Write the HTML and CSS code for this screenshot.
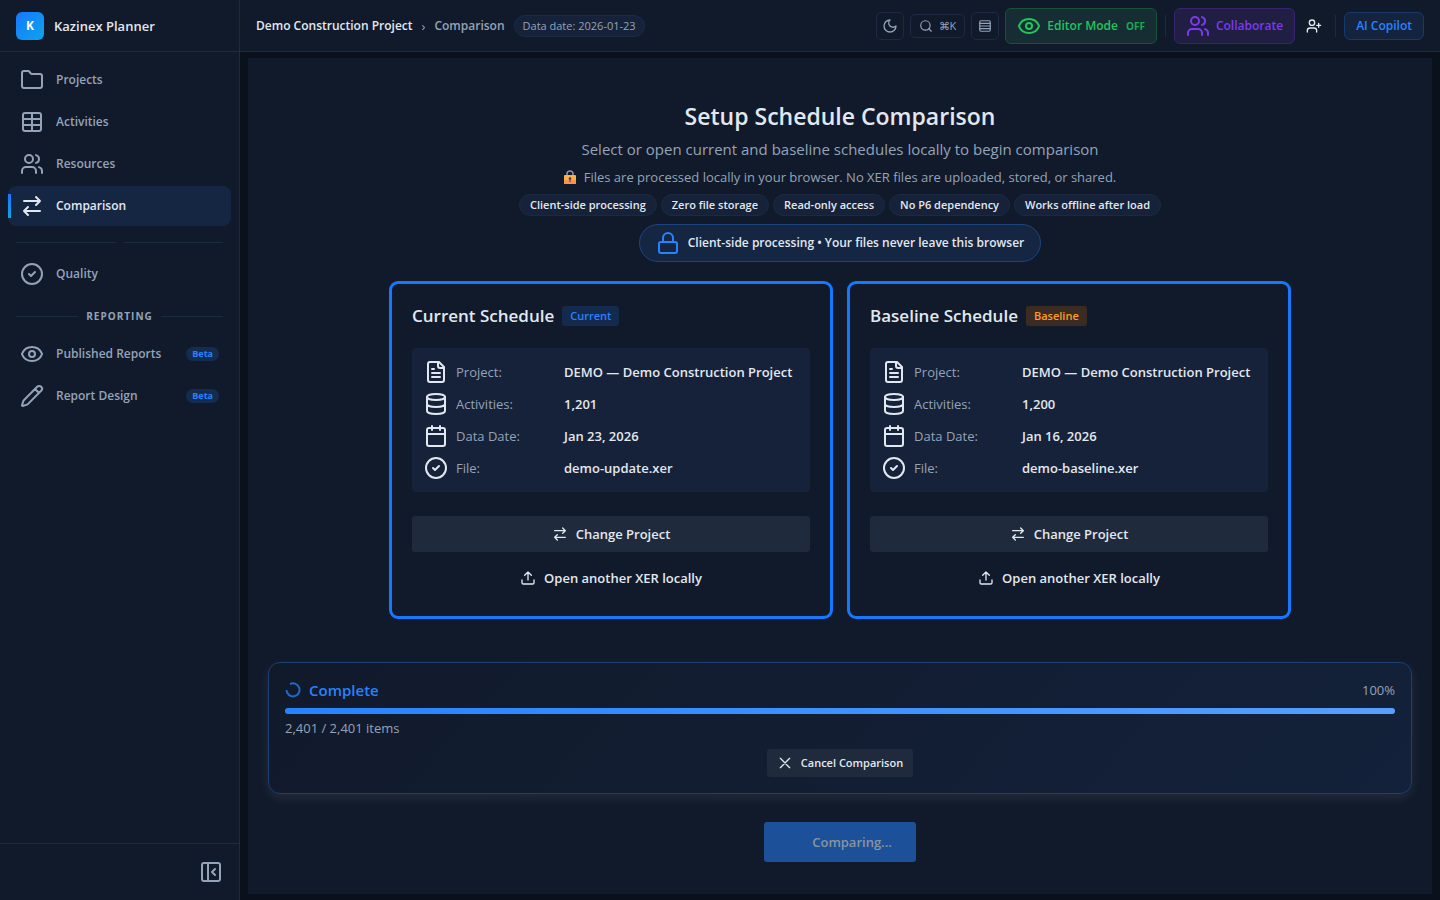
FILE: index.html
```html
<!DOCTYPE html>
<html lang="en">
<head>
    <meta charset="UTF-8">
    <meta name="viewport" content="width=device-width, initial-scale=1.0">
    <title>Kazinex Planner</title>
    <link rel="stylesheet" href="styles.css">
</head>
<body>
    <!-- Icon set -->
    <svg class="sprite" aria-hidden="true">
        <symbol id="i-folder" viewBox="0 0 24 24"><path d="M20 20a2 2 0 0 0 2-2V8a2 2 0 0 0-2-2h-7.9a2 2 0 0 1-1.69-.9L9.6 3.9A2 2 0 0 0 7.93 3H4a2 2 0 0 0-2 2v13a2 2 0 0 0 2 2Z"/></symbol>
        <symbol id="i-table" viewBox="0 0 24 24"><rect x="3" y="3" width="18" height="18" rx="2"/><path d="M12 3v18M3 9h18M3 15h18"/></symbol>
        <symbol id="i-users" viewBox="0 0 24 24"><path d="M16 21v-2a4 4 0 0 0-4-4H6a4 4 0 0 0-4 4v2"/><circle cx="9" cy="7" r="4"/><path d="M22 21v-2a4 4 0 0 0-3-3.87M16 3.13a4 4 0 0 1 0 7.75"/></symbol>
        <symbol id="i-swap" viewBox="0 0 24 24"><path d="m16 3 4 4-4 4M20 7H4M8 21l-4-4 4-4M4 17h16"/></symbol>
        <symbol id="i-check" viewBox="0 0 24 24"><circle cx="12" cy="12" r="10"/><path d="m9 12 2 2 4-4"/></symbol>
        <symbol id="i-eye" viewBox="0 0 24 24"><path d="M2.06 12.35a1 1 0 0 1 0-.7 10.75 10.75 0 0 1 19.88 0 1 1 0 0 1 0 .7 10.75 10.75 0 0 1-19.88 0"/><circle cx="12" cy="12" r="3"/></symbol>
        <symbol id="i-pencil" viewBox="0 0 24 24"><path d="M21.174 6.812a1 1 0 0 0-3.986-3.987L3.842 16.174a2 2 0 0 0-.5.83l-1.321 4.352a.5.5 0 0 0 .623.622l4.353-1.32a2 2 0 0 0 .83-.497zM15 5l4 4"/></symbol>
        <symbol id="i-collapse" viewBox="0 0 24 24"><rect x="3" y="3" width="18" height="18" rx="2"/><path d="M9 3v18M16 15l-3-3 3-3"/></symbol>
        <symbol id="i-moon" viewBox="0 0 24 24"><path d="M12 3a6 6 0 0 0 9 9 9 9 0 1 1-9-9Z"/></symbol>
        <symbol id="i-search" viewBox="0 0 24 24"><circle cx="11" cy="11" r="8"/><path d="m21 21-4.3-4.3"/></symbol>
        <symbol id="i-rows" viewBox="0 0 24 24"><rect x="3" y="3" width="18" height="18" rx="2"/><path d="M21 7.5H3M21 12H3M21 16.5H3"/></symbol>
        <symbol id="i-user-plus" viewBox="0 0 24 24"><path d="M16 21v-2a4 4 0 0 0-4-4H6a4 4 0 0 0-4 4v2"/><circle cx="9" cy="7" r="4"/><path d="M19 8v6M22 11h-6"/></symbol>
        <symbol id="i-lock" viewBox="0 0 24 24"><rect x="3" y="11" width="18" height="11" rx="2"/><path d="M7 11V7a5 5 0 0 1 10 0v4"/></symbol>
        <symbol id="i-file" viewBox="0 0 24 24"><path d="M15 2H6a2 2 0 0 0-2 2v16a2 2 0 0 0 2 2h12a2 2 0 0 0 2-2V7Z"/><path d="M14 2v4a2 2 0 0 0 2 2h4M10 9H8M16 13H8M16 17H8"/></symbol>
        <symbol id="i-database" viewBox="0 0 24 24"><ellipse cx="12" cy="5" rx="9" ry="3"/><path d="M3 5v14a9 3 0 0 0 18 0V5M3 12a9 3 0 0 0 18 0"/></symbol>
        <symbol id="i-calendar" viewBox="0 0 24 24"><path d="M8 2v4M16 2v4"/><rect x="3" y="4" width="18" height="18" rx="2"/><path d="M3 10h18"/></symbol>
        <symbol id="i-upload" viewBox="0 0 24 24"><path d="M21 15v4a2 2 0 0 1-2 2H5a2 2 0 0 1-2-2v-4M17 8l-5-5-5 5M12 3v12"/></symbol>
        <symbol id="i-close" viewBox="0 0 24 24"><path d="M19 5 5 19M5 5l14 14"/></symbol>
    </svg>

    <div class="app">
        <aside class="sidebar">
            <div class="brand">
                <span class="brand-logo">K</span>
                <span class="brand-name">Kazinex Planner</span>
            </div>
            <nav class="nav">
                <a class="nav-item" href="#projects"><svg class="icon"><use href="#i-folder"/></svg>Projects</a>
                <a class="nav-item" href="#activities"><svg class="icon"><use href="#i-table"/></svg>Activities</a>
                <a class="nav-item" href="#resources"><svg class="icon"><use href="#i-users"/></svg>Resources</a>
                <a class="nav-item active" href="#comparison"><svg class="icon"><use href="#i-swap"/></svg>Comparison</a>
                <div class="nav-divider"></div>
                <a class="nav-item" href="#quality"><svg class="icon"><use href="#i-check"/></svg>Quality</a>
                <div class="nav-divider nav-section">REPORTING</div>
                <a class="nav-item" href="#reports"><svg class="icon"><use href="#i-eye"/></svg>Published Reports<span class="beta">Beta</span></a>
                <a class="nav-item" href="#design"><svg class="icon"><use href="#i-pencil"/></svg>Report Design<span class="beta">Beta</span></a>
            </nav>
            <div class="sidebar-footer">
                <button class="collapse" aria-label="Collapse sidebar"><svg class="icon"><use href="#i-collapse"/></svg></button>
            </div>
        </aside>

        <div class="main">
            <header class="topbar">
                <div class="crumbs">
                    <a class="crumb-project" href="#project">Demo Construction Project</a>
                    <span class="crumb-sep">›</span>
                    <span class="crumb-page">Comparison</span>
                    <span class="date-chip">Data date: 2026-01-23</span>
                </div>
                <div class="actions">
                    <button class="tool" aria-label="Dark mode"><svg class="icon small"><use href="#i-moon"/></svg></button>
                    <button class="tool search"><svg class="icon tiny"><use href="#i-search"/></svg>⌘K</button>
                    <button class="tool" aria-label="Density"><svg class="icon tiny"><use href="#i-rows"/></svg></button>
                    <button class="mode editor"><svg class="icon"><use href="#i-eye"/></svg>Editor Mode <small>OFF</small></button>
                    <span class="line"></span>
                    <button class="mode collab"><svg class="icon"><use href="#i-users"/></svg>Collaborate</button>
                    <button class="invite" aria-label="Invite user"><svg class="icon small"><use href="#i-user-plus"/></svg></button>
                    <span class="line"></span>
                    <button class="copilot">AI Copilot</button>
                </div>
            </header>

            <main class="content">
                <div class="panel">
                    <section class="intro">
                        <h1>Setup Schedule Comparison</h1>
                        <p class="subtitle">Select or open current and baseline schedules locally to begin comparison</p>
                        <p class="note">
                            <svg class="padlock" viewBox="0 0 12 14" aria-hidden="true">
                                <path d="M3 6V4a3 3 0 0 1 6 0v2" fill="none" stroke="#9a8f98" stroke-width="1.5"/>
                                <rect y="5" width="12" height="9" rx="1" fill="#fbb04a"/>
                                <rect y="10" width="12" height="4" rx="1" fill="#f8924f"/>
                                <circle cx="6" cy="8.5" r="1.3" fill="#4a3b40"/>
                                <path d="M6 9v3" stroke="#4a3b40"/>
                            </svg>
                            Files are processed locally in your browser. No XER files are uploaded, stored, or shared.
                        </p>
                        <div class="chips">
                            <span class="chip">Client-side processing</span>
                            <span class="chip">Zero file storage</span>
                            <span class="chip">Read-only access</span>
                            <span class="chip">No P6 dependency</span>
                            <span class="chip">Works offline after load</span>
                        </div>
                        <div class="privacy"><svg class="icon"><use href="#i-lock"/></svg>Client-side processing • Your files never leave this browser</div>
                    </section>

                    <div class="cards">
                        <section class="card">
                            <h2>Current Schedule <span class="tag current">Current</span></h2>
                            <dl class="details">
                                <div><svg class="icon"><use href="#i-file"/></svg><dt>Project:</dt><dd>DEMO — Demo Construction Project</dd></div>
                                <div><svg class="icon"><use href="#i-database"/></svg><dt>Activities:</dt><dd>1,201</dd></div>
                                <div><svg class="icon"><use href="#i-calendar"/></svg><dt>Data Date:</dt><dd>Jan 23, 2026</dd></div>
                                <div><svg class="icon"><use href="#i-check"/></svg><dt>File:</dt><dd>demo-update.xer</dd></div>
                            </dl>
                            <button class="button filled"><svg class="icon small"><use href="#i-swap"/></svg>Change Project</button>
                            <button class="button"><svg class="icon small"><use href="#i-upload"/></svg>Open another XER locally</button>
                        </section>
                        <section class="card">
                            <h2>Baseline Schedule <span class="tag baseline">Baseline</span></h2>
                            <dl class="details">
                                <div><svg class="icon"><use href="#i-file"/></svg><dt>Project:</dt><dd>DEMO — Demo Construction Project</dd></div>
                                <div><svg class="icon"><use href="#i-database"/></svg><dt>Activities:</dt><dd>1,200</dd></div>
                                <div><svg class="icon"><use href="#i-calendar"/></svg><dt>Data Date:</dt><dd>Jan 16, 2026</dd></div>
                                <div><svg class="icon"><use href="#i-check"/></svg><dt>File:</dt><dd>demo-baseline.xer</dd></div>
                            </dl>
                            <button class="button filled"><svg class="icon small"><use href="#i-swap"/></svg>Change Project</button>
                            <button class="button"><svg class="icon small"><use href="#i-upload"/></svg>Open another XER locally</button>
                        </section>
                    </div>

                    <section class="progress">
                        <div class="progress-head">
                            <svg class="spinner" viewBox="0 0 16 16" aria-hidden="true"><path d="M5 2.1A6.5 6.5 0 1 1 1.5 8"/></svg>
                            <span class="progress-title">Complete</span>
                            <span class="progress-percent">100%</span>
                        </div>
                        <div class="bar" role="progressbar" aria-label="Comparison progress" aria-valuenow="100" aria-valuemin="0" aria-valuemax="100">
                            <div class="bar-fill" style="width: 100%"></div>
                        </div>
                        <p class="progress-items">2,401 / 2,401 items</p>
                        <button class="cancel"><svg class="icon small"><use href="#i-close"/></svg>Cancel Comparison</button>
                    </section>

                    <button class="compare" disabled>Comparing...</button>
                </div>
            </main>
        </div>
    </div>
</body>
</html>
```

FILE: styles.css
```css
* {
    box-sizing: border-box;
}
body {
    margin: 0;
    font-family: "Segoe UI", "Open Sans", "Noto Sans", sans-serif;
    font-size: 13px;
    line-height: 20px;
    color: #e2e8f0;
    background-color: #0a111d;
}
h1, h2, p, dl, dd {
    margin: 0;
}
a {
    color: inherit;
    text-decoration: none;
}
button {
    display: flex;
    align-items: center;
    justify-content: center;
    padding: 0;
    border: none;
    background: none;
    color: inherit;
    font: inherit;
    font-weight: 600;
    white-space: nowrap;
    cursor: pointer;
}
.sprite {
    display: none;
}
.icon {
    width: 24px;
    height: 24px;
    flex-shrink: 0;
    fill: none;
    stroke: currentColor;
    stroke-width: 2;
    stroke-linecap: round;
    stroke-linejoin: round;
}
.icon.small {
    width: 16px;
    height: 16px;
}
.icon.tiny {
    width: 14px;
    height: 14px;
}
.app {
    display: flex;
    min-height: 100vh;
}

/* Sidebar */
.sidebar {
    display: flex;
    flex-direction: column;
    width: 240px;
    flex-shrink: 0;
    background-color: #111a2b;
    border-right: 1px solid #1e2a40;
}
.brand {
    display: flex;
    align-items: center;
    gap: 10px;
    height: 52px;
    padding: 0 16px;
    border-bottom: 1px solid #1e2a40;
}
.brand-logo {
    display: flex;
    align-items: center;
    justify-content: center;
    width: 28px;
    height: 28px;
    border-radius: 6px;
    background: linear-gradient(135deg, #1677ff, #0ea5e9);
    color: #fff;
    font-size: 12px;
    font-weight: 700;
}
.brand-name {
    font-weight: 600;
}
.nav {
    display: flex;
    flex-direction: column;
    gap: 2px;
    flex: 1;
    padding: 8px;
}
.nav-item {
    display: flex;
    align-items: center;
    gap: 12px;
    height: 40px;
    padding: 0 12px;
    border-radius: 8px;
    color: #94a3b8;
    font-size: 12px;
    line-height: 22px;
    font-weight: 600;
}
.nav-item.active {
    position: relative;
    background-color: #152642;
    color: #e2e8f0;
}
.nav-item.active::before {
    content: "";
    position: absolute;
    left: 0;
    top: 8px;
    width: 3px;
    height: 24px;
    background: linear-gradient(#1677ff, #0ea5e9);
}
.nav-divider {
    display: flex;
    align-items: center;
    gap: 8px;
    height: 24px;
    padding: 4px 8px 0;
}
.nav-divider::before,
.nav-divider::after {
    content: "";
    flex: 1;
    height: 1px;
    background-color: #1c2a3e;
}
.nav-section {
    height: 36px;
    padding: 4px 8px 0;
    color: #94a3b8;
    font-size: 10px;
    font-weight: 700;
    letter-spacing: 1px;
}
.beta {
    margin-left: auto;
    padding: 0 6px;
    border-radius: 7px;
    background-color: #142c50;
    color: #2683ff;
    font-size: 9px;
    line-height: 14px;
    font-weight: 700;
}
.sidebar-footer {
    display: flex;
    justify-content: flex-end;
    padding: 16px;
    border-top: 1px solid #1e2a40;
}
.collapse {
    color: #94a3b8;
}

/* Top bar */
.main {
    display: flex;
    flex-direction: column;
    flex: 1;
    min-width: 0;
}
.topbar {
    display: flex;
    align-items: center;
    justify-content: space-between;
    height: 52px;
    padding: 0 16px;
    background-color: #111a2b;
    border-bottom: 1px solid #1e2a40;
}
.crumbs,
.actions {
    display: flex;
    align-items: center;
    gap: 9px;
    white-space: nowrap;
}
.crumb-project,
.crumb-page {
    font-size: 12px;
    font-weight: 600;
}
.crumb-sep,
.crumb-page {
    color: #94a3b8;
}
.date-chip {
    padding: 0 8px;
    border: 1px solid #1c2a44;
    border-radius: 11px;
    background-color: #162239;
    color: #94a3b8;
    font-size: 11px;
}
.actions {
    gap: 6px;
}
.tool {
    width: 28px;
    height: 28px;
    border: 1px solid #1e2a42;
    border-radius: 5px;
    color: #94a3b8;
}
.tool.search {
    gap: 6px;
    width: auto;
    height: 24px;
    padding: 0 8px;
    font-size: 11px;
    font-weight: 400;
}
.mode {
    gap: 6px;
    height: 36px;
    padding: 0 11px;
    border: 1px solid;
    border-radius: 6px;
    font-size: 12px;
}
.mode small {
    margin-left: 2px;
    font-size: 10px;
    font-weight: 700;
    opacity: 0.8;
}
.editor {
    border-color: #175337;
    background-color: #162d33;
    color: #22c55e;
}
.collab {
    border-color: #38236f;
    background-color: #201f43;
    color: #7c3aed;
}
.line {
    width: 1px;
    height: 22px;
    margin: 0 2px;
    background-color: #1e2a40;
}
.invite {
    padding: 0 5px;
}
.copilot {
    height: 28px;
    padding: 0 11px;
    border: 1px solid #183a6b;
    border-radius: 6px;
    background-color: #14243f;
    color: #2683ff;
    font-size: 12px;
}

/* Comparison setup */
.content {
    display: flex;
    flex: 1;
    padding: 6px 8px;
}
.panel {
    display: flex;
    flex-direction: column;
    align-items: center;
    flex: 1;
    padding: 42px 20px 32px;
    background-color: #111a2b;
}
.intro {
    display: flex;
    flex-direction: column;
    align-items: center;
    gap: 6px;
    text-align: center;
}
h1 {
    font-size: 23px;
    line-height: 32px;
    font-weight: 600;
}
.subtitle {
    color: #94a3b8;
    font-size: 15px;
    line-height: 22px;
}
.note {
    display: flex;
    align-items: center;
    gap: 8px;
    color: #94a3b8;
    line-height: 22px;
}
.padlock {
    width: 12px;
    height: 14px;
}
.chips {
    display: flex;
    flex-wrap: wrap;
    justify-content: center;
    gap: 4px;
}
.chip {
    padding: 0 10px;
    border: 1px solid #1c2940;
    border-radius: 11px;
    background-color: #162239;
    font-size: 11px;
    font-weight: 600;
}
.privacy {
    display: flex;
    align-items: center;
    gap: 8px;
    margin-top: 2px;
    padding: 6px 16px;
    border: 1px solid #1d447f;
    border-radius: 19px;
    background-color: #152643;
    font-size: 12px;
    line-height: 24px;
    font-weight: 600;
}
.privacy .icon {
    color: #2683ff;
}
.cards {
    display: grid;
    grid-template-columns: 1fr 1fr;
    gap: 14px;
    width: 100%;
    max-width: 902px;
    margin-top: 19px;
}
.card {
    padding: 20px;
    border: 3px solid #1677ff;
    border-radius: 9px;
}
h2 {
    display: flex;
    align-items: center;
    gap: 8px;
    font-size: 17px;
    line-height: 24px;
    font-weight: 600;
}
.tag {
    padding: 0 8px;
    border-radius: 3px;
    font-size: 11px;
    line-height: 20px;
}
.tag.current {
    background-color: #142a4d;
    color: #2683ff;
}
.tag.baseline {
    background-color: #3a2c23;
    color: #ff9d1f;
}
.details {
    display: flex;
    flex-direction: column;
    gap: 8px;
    margin: 20px 0 24px;
    padding: 12px;
    border-radius: 4px;
    background-color: #162239;
}
.details div {
    display: flex;
    align-items: center;
    gap: 8px;
}
.details dt {
    width: 100px;
    color: #94a3b8;
}
.details dd {
    font-weight: 600;
    white-space: nowrap;
}
.button {
    gap: 8px;
    width: 100%;
    height: 36px;
    border-radius: 3px;
}
.button.filled {
    margin-bottom: 8px;
    background-color: #1f2a3c;
}
.progress {
    display: flex;
    flex-direction: column;
    width: 100%;
    margin-top: 43px;
    padding: 16px;
    border: 1px solid #1d3f75;
    border-radius: 12px;
    background: linear-gradient(135deg, #111a2b, #13213a);
    box-shadow: 0 4px 12px rgba(255, 255, 255, 0.08);
}
.progress-head {
    display: flex;
    align-items: center;
    gap: 8px;
    line-height: 22px;
}
.spinner {
    width: 16px;
    height: 16px;
    fill: none;
    stroke: #2069c9;
    stroke-width: 2;
}
.progress-title {
    color: #2683ff;
    font-size: 15px;
    font-weight: 600;
}
.progress-percent {
    margin-left: auto;
    color: #94a3b8;
}
.bar {
    height: 6px;
    margin: 7px 0 4px;
    border-radius: 3px;
    background-color: #1f2a3c;
}
.bar-fill {
    height: 100%;
    border-radius: 3px;
    background: linear-gradient(90deg, #2683ff, #579fff);
}
.progress-items {
    color: #94a3b8;
}
.cancel {
    gap: 8px;
    align-self: center;
    height: 28px;
    margin-top: 11px;
    padding: 0 10px;
    border-radius: 3px;
    background-color: #1f2a3c;
    font-size: 11px;
}
.compare {
    height: 40px;
    margin-top: 28px;
    padding: 0 24px 0 48px;
    border-radius: 3px;
    background-color: #1c5199;
    color: #8a94a0;
    cursor: default;
}
```
